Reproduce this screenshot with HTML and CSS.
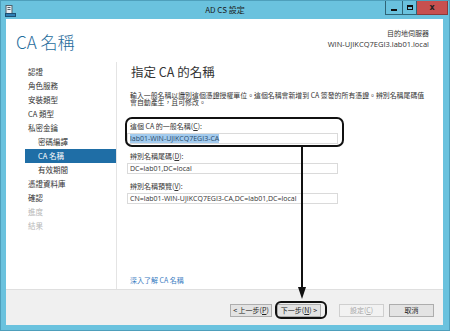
FILE: index.html
```html
<!DOCTYPE html>
<html lang="zh-Hant">
<head>
<meta charset="utf-8">
<title>AD CS 設定</title>
<link rel="stylesheet" href="styles.css">
</head>
<body>
<div class="window">
  <div class="titlebar">
    <svg class="app-icon" width="11" height="12" viewBox="0 0 11 12">
      <rect x="1" y="0.5" width="6" height="8" fill="#e8eef2" stroke="#50606a" stroke-width="1"/>
      <rect x="2.5" y="2" width="3" height="1" fill="#50606a"/>
      <rect x="2.5" y="4" width="3" height="1" fill="#50606a"/>
      <rect x="0.5" y="8.5" width="10" height="3" fill="#2f7fb5" stroke="#1d4f73" stroke-width="1"/>
    </svg>
    <div class="title">AD CS 設定</div>
    <div class="controls">
      <div class="ctl ctl-min"><span class="glyph-min"></span></div>
      <div class="ctl ctl-max"><span class="glyph-max"></span></div>
      <div class="ctl ctl-close">x</div>
    </div>
  </div>

  <div class="client">
    <div class="header">
      <div class="page-title">CA 名稱</div>
      <div class="dest">
        <div>目的地伺服器</div>
        <div class="host">WIN-UJIKCQ7EGI3.lab01.local</div>
      </div>
    </div>

    <div class="main">
      <nav class="nav">
        <div class="nav-item">認證</div>
        <div class="nav-item">角色服務</div>
        <div class="nav-item">安裝類型</div>
        <div class="nav-item">CA 類型</div>
        <div class="nav-item">私密金鑰</div>
        <div class="nav-item sub">密碼編譯</div>
        <div class="nav-item sub active">CA 名稱</div>
        <div class="nav-item sub">有效期間</div>
        <div class="nav-item">憑證資料庫</div>
        <div class="nav-item">確認</div>
        <div class="nav-item disabled">進度</div>
        <div class="nav-item disabled">結果</div>
      </nav>

      <section class="panel">
        <h2 class="panel-title">指定 CA 的名稱</h2>
        <p class="desc">輸入一般名稱以識別這個憑證授權單位。這個名稱會新增到 CA 簽發的所有憑證。辨別名稱尾碼值會自動產生，且可修改。</p>

        <div class="field">
          <div class="label">這個 CA 的一般名稱(<u>C</u>):</div>
          <div class="input"><span class="selected">lab01-WIN-UJIKCQ7EGI3-CA</span></div>
        </div>
        <div class="field">
          <div class="label">辨別名稱尾碼(<u>D</u>):</div>
          <div class="input">DC=lab01,DC=local</div>
        </div>
        <div class="field">
          <div class="label">辨別名稱預覽(<u>V</u>):</div>
          <div class="input">CN=lab01-WIN-UJIKCQ7EGI3-CA,DC=lab01,DC=local</div>
        </div>

        <a class="link">深入了解 CA 名稱</a>
      </section>
    </div>

    <div class="footer">
      <div class="btn btn-prev">&lt; 上一步(<u>P</u>)</div>
      <div class="btn btn-next">下一步(<u>N</u>) &gt;</div>
      <div class="btn btn-cfg disabled">設定(<u>C</u>)</div>
      <div class="btn btn-cancel">取消</div>
    </div>
  </div>

  <div class="callout callout-field"></div>
  <div class="callout callout-next"></div>
  <svg class="arrow" width="10" height="156" viewBox="0 0 10 156">
    <line x1="5" y1="0" x2="5" y2="144" stroke="#111" stroke-width="2"/>
    <polygon points="1,141 9,141 5,153" fill="#111"/>
  </svg>
</div>
</body>
</html>
```

FILE: styles.css
```css
* { box-sizing: border-box; }

html, body {
  margin: 0;
  padding: 0;
  background: #ffffff;
}

body {
  font-family: "Noto Sans CJK TC", "Noto Sans", sans-serif;
  color: #333;
}

.window {
  position: relative;
  width: 450px;
  height: 331px;
  background: #6ac2de;
  border: 1px solid #4e9fbb;
  display: flex;
  flex-direction: column;
}

/* Title bar */
.titlebar {
  position: relative;
  height: 18px;
  display: flex;
  align-items: center;
  flex-shrink: 0;
}

.app-icon {
  margin-left: 4px;
  margin-top: 1px;
}

.title {
  position: absolute;
  left: 0;
  right: 0;
  top: 3px;
  text-align: center;
  font-size: 8px;
  line-height: 11px;
  color: #1a1a1a;
}

.controls {
  position: absolute;
  top: 0;
  right: 1px;
  display: flex;
  height: 14px;
}

.ctl {
  height: 14px;
  border: 1px solid #2f6476;
  border-top: none;
  display: flex;
  align-items: center;
  justify-content: center;
}

.ctl-min { width: 17px; border-right: none; }
.ctl-max { width: 15px; }
.ctl-close {
  width: 31px;
  background: #c7504f;
  border-color: #8b3a39;
  border-left: none;
  font-family: "DejaVu Sans", sans-serif;
  font-weight: bold;
  font-size: 8px;
  line-height: 12px;
  color: #222;
}

.glyph-min {
  display: block;
  width: 6px;
  height: 2px;
  background: #111;
  margin-top: 5px;
}

.glyph-max {
  display: block;
  width: 6px;
  height: 5px;
  border: 1.5px solid #111;
  border-top-width: 2px;
}

/* Client area */
.client {
  flex: 1;
  margin: 0 6px 5px 5px;
  background: #ffffff;
  display: flex;
  flex-direction: column;
}

.header {
  height: 43px;
  display: flex;
  justify-content: space-between;
  padding: 0 14px 0 10px;
  flex-shrink: 0;
}

.page-title {
  font-size: 17px;
  line-height: 18px;
  padding-top: 14px;
  color: #1f6c9c;
  font-weight: 300;
}

.dest {
  padding-top: 9px;
  text-align: right;
  font-size: 7px;
  line-height: 11px;
  color: #333;
}

.dest .host {
  font-family: "Open Sans", "Noto Sans", sans-serif;
  font-size: 7.5px;
}

.main {
  flex: 1;
  display: flex;
  min-height: 0;
}

/* Navigation */
.nav {
  width: 111px;
  flex-shrink: 0;
  border-right: 1px solid #e4e4e4;
  padding-top: 3px;
}

.nav-item {
  height: 14px;
  line-height: 14px;
  margin-left: 19px;
  padding-left: 3px;
  font-size: 7.5px;
  color: #333;
}

.nav-item.sub { padding-left: 13px; }

.nav-item.active {
  background: #1f6ea6;
  color: #ffffff;
}

.nav-item.disabled { color: #b8b8b8; }

/* Panel */
.panel {
  flex: 1;
  display: flex;
  flex-direction: column;
  padding: 2px 0 2px 13px;
}

.panel-title {
  margin: 0;
  font-size: 12.5px;
  line-height: 16px;
  font-weight: 400;
  color: #333;
  padding-left: 1px;
}

.desc {
  margin: 12px 0 0 0;
  width: 300px;
  font-size: 6.9px;
  line-height: 7px;
  color: #333;
}

.field {
  display: flex;
  flex-direction: column;
}

.field:first-of-type { margin-top: 16px; }
.field + .field { margin-top: 8px; }

.label {
  font-size: 7px;
  line-height: 9px;
  color: #333;
}

.label u { text-decoration: underline; }

.input {
  margin-top: 2px;
  margin-left: -3px;
  width: 211px;
  height: 11px;
  border: 1px solid #dadada;
  padding: 0 2px;
  font-family: "Open Sans", "Noto Sans", sans-serif;
  font-size: 7px;
  line-height: 9px;
  color: #333;
  white-space: nowrap;
  overflow: hidden;
}

.selected {
  background: #a3cbee;
  color: #2a4a6a;
}

.link {
  margin-top: auto;
  font-size: 7px;
  line-height: 9px;
  color: #3a7cc2;
  margin-bottom: 2px;
}

/* Footer */
.footer {
  height: 36px;
  flex-shrink: 0;
  background: #f0f0f0;
  border-top: 1px solid #dfdfdf;
  display: flex;
  justify-content: flex-end;
  align-items: flex-start;
  padding: 14px 9px 0 0;
}

.btn {
  height: 13px;
  border: 1px solid #adadad;
  background: #e3e3e3;
  font-size: 7px;
  line-height: 11px;
  text-align: center;
  color: #222;
}

.btn-prev { width: 42px; }
.btn-next { width: 44px; margin-left: 5px; }
.btn-cfg { width: 45px; margin-left: 18px; }
.btn-cancel { width: 45px; margin-left: 5px; }

.btn.disabled {
  color: #a8a8a8;
  border-color: #cfcfcf;
  background: #f2f2f2;
}

/* Annotation overlays */
.callout {
  position: absolute;
  border: 2px solid #111;
}

.callout-field {
  left: 124px;
  top: 116px;
  width: 219px;
  height: 30px;
  border-radius: 7px;
}

.callout-next {
  left: 274px;
  top: 300px;
  width: 52px;
  height: 18px;
  border-radius: 6px;
}

.arrow {
  position: absolute;
  left: 296px;
  top: 145px;
}
```
